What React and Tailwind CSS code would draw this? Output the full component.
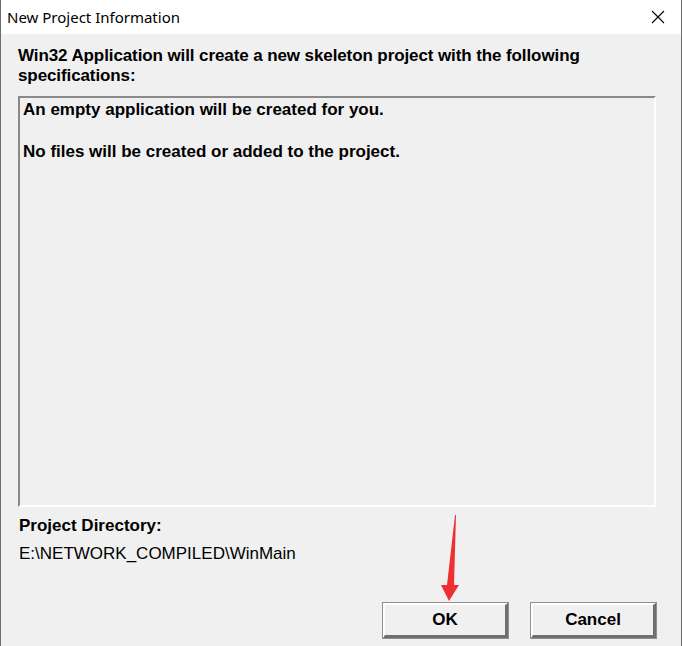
export default function App() {
    return (
        <div
            className="w-[682px] h-[646px] flex flex-col bg-[#f0f0f0] border-x border-[#6d6d6d] overflow-hidden"
            style={{ fontFamily: '"Liberation Sans", Arial, sans-serif' }}
        >
            {/* title bar */}
            <div className="h-[34px] bg-white flex items-center justify-between pl-[6px] pr-[16px]">
                <span
                    className="text-[15px] text-black"
                    style={{ fontFamily: '"Noto Sans", "Open Sans", sans-serif' }}
                >
                    New Project Information
                </span>
                <svg width="14" height="14" viewBox="0 0 14 14">
                    <path d="M1 1 L13 13 M13 1 L1 13" stroke="#000" strokeWidth="1.1" />
                </svg>
            </div>

            <div className="flex-1 flex flex-col px-[17px] pt-[12px] text-black">
                <p className="text-[17px] font-bold leading-[20px] pr-[60px] tracking-[-0.1px]">
                    Win32 Application will create a new skeleton project with the following specifications:
                </p>

                <div className="mt-[10px] w-[638px] h-[411px] border-t-2 border-l-2 border-[#8a8a8a] border-b-2 border-r-2 border-b-white border-r-white pl-[3px] pt-[2px]">
                    <p className="text-[17px] font-bold leading-[20px]">
                        An empty application will be created for you.
                    </p>
                    <p className="text-[17px] font-bold leading-[20px] mt-[22px]">
                        No files will be created or added to the project.
                    </p>
                </div>

                <p className="text-[17px] font-bold leading-[20px] mt-[9px] ml-[1px]">
                    Project Directory:
                </p>
                <p className="text-[17px] leading-[20px] mt-[8px] ml-[1px]">
                    E:\NETWORK_COMPILED\WinMain
                </p>

                <div className="mt-auto mb-[8px] flex justify-end gap-[23px] pr-[8px]">
                    <div className="relative">
                        <button className="w-[125px] h-[35px] bg-[#f0f0f0] border-t-2 border-l-2 border-white border-b-[3px] border-r-[3px] border-b-[#6f6f6f] border-r-[#6f6f6f] outline outline-1 outline-[#8f8f8f] text-[17px] font-bold">
                            OK
                        </button>
                        <svg
                            className="absolute left-[57px] top-[-90px]"
                            width="24"
                            height="90"
                            viewBox="0 0 24 90"
                        >
                            <path d="M16 2 L14 72 L19 72 L9 88 L1 72 L7 72 L15 2 Z" fill="#f03030" />
                        </svg>
                    </div>
                    <button className="w-[125px] h-[35px] bg-[#f0f0f0] border-t-2 border-l-2 border-white border-b-[3px] border-r-[3px] border-b-[#6f6f6f] border-r-[#6f6f6f] outline outline-1 outline-[#8f8f8f] text-[17px] font-bold">
                        Cancel
                    </button>
                </div>
            </div>
        </div>
    );
}
